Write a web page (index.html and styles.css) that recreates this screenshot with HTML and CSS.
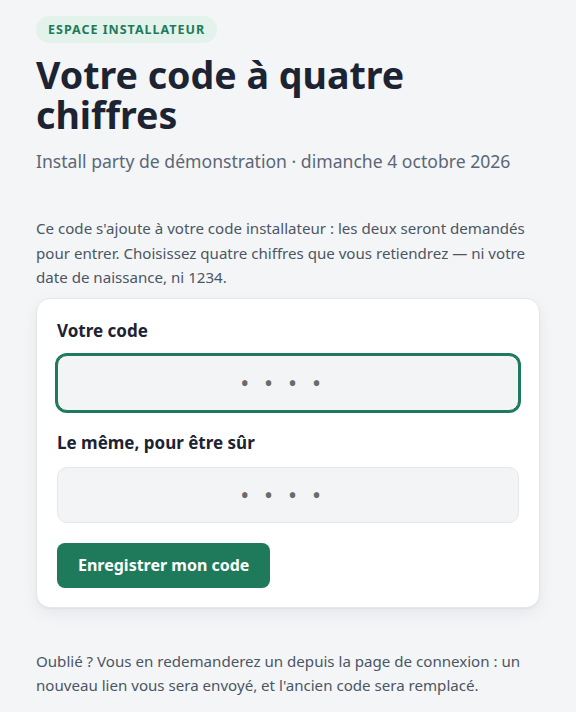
FILE: index.html
```html
<!DOCTYPE html>
<html lang="fr">
<head>
  <meta charset="UTF-8">
  <meta name="viewport" content="width=device-width, initial-scale=1.0">
  <title>Votre code à quatre chiffres</title>
  <link rel="stylesheet" href="styles.css">
</head>
<body>
  <main class="page">
    <header class="page-head">
      <span class="badge">Espace installateur</span>
      <h1 class="page-title">Votre code à quatre chiffres</h1>
      <p class="page-sub">Install party de démonstration · dimanche 4 octobre 2026</p>
    </header>

    <p class="intro">Ce code s'ajoute à votre code installateur : les deux seront demandés pour entrer. Choisissez quatre chiffres que vous retiendrez — ni votre date de naissance, ni 1234.</p>

    <form class="code-card" action="#" method="post">
      <div class="field">
        <label for="pin" class="field-label">Votre code</label>
        <input type="password" id="pin" class="pin-input is-focus" inputmode="numeric" maxlength="4" value="1234">
      </div>
      <div class="field">
        <label for="pin-confirm" class="field-label">Le même, pour être sûr</label>
        <input type="password" id="pin-confirm" class="pin-input" inputmode="numeric" maxlength="4" value="1234">
      </div>
      <button type="submit" class="btn-primary">Enregistrer mon code</button>
    </form>

    <p class="note">Oublié ? Vous en redemanderez un depuis la page de connexion : un nouveau lien vous sera envoyé, et l'ancien code sera remplacé.</p>
  </main>
</body>
</html>
```

FILE: styles.css
```css
*, *::before, *::after { box-sizing: border-box; }
body { margin: 0; background-color: #f4f5f7; font-family: "Noto Sans", "Open Sans", sans-serif; color: #1c2333; }
.page { max-width: 576px; margin: 0 auto; padding: 16px 36px 24px; }

/* en-tête */
.badge { display: inline-block; padding: 0 12px; height: 27px; line-height: 27px; border-radius: 999px; background-color: #e3f3ec; color: #1e7a5a; font-size: 12.5px; font-weight: 700; letter-spacing: 0.08em; text-transform: uppercase; }
.page-title { margin: 12px 0 0; font-size: 37.6px; line-height: 40px; font-weight: 700; color: #1c2333; }
.page-sub { margin: 13px 0 0; font-size: 17.6px; line-height: 27px; color: #5b6676; }

.intro { margin: 41px 0 8px; font-size: 15.1px; line-height: 24.5px; color: #4b5563; }

/* carte */
.code-card {
  display: flex;
  flex-direction: column;
  align-items: flex-start;
  gap: 20px;
  padding: 20px 20px 19px;
  background-color: #fff;
  border: 1px solid #e5e7eb;
  border-radius: 14px;
  box-shadow: 0 6px 16px rgba(17, 24, 39, 0.06), 0 1px 2px rgba(17, 24, 39, 0.04);
}
.field { display: flex; flex-direction: column; gap: 12px; width: 100%; }
.field-label { font-size: 17px; line-height: 24px; font-weight: 700; color: #1c2333; }
.pin-input {
  width: 100%;
  height: 56px;
  padding: 0 12px;
  border: 1px solid #e5e7eb;
  border-radius: 10px;
  background-color: #f3f4f6;
  font-family: inherit;
  font-size: 24px;
  letter-spacing: 0.62em;
  text-align: center;
  color: #6b6b6b;
  outline: none;
}
.pin-input.is-focus,
.pin-input:focus { border-color: #1e7a5a; box-shadow: 0 0 0 2px #1e7a5a; }

.btn-primary { height: 45px; padding: 0 21px; border: 0; border-radius: 8px; background-color: #1e7a5a; color: #fff; font-family: inherit; font-size: 16px; font-weight: 700; cursor: pointer; }

.note { margin: 41px 0 0; font-size: 15.1px; line-height: 24.5px; color: #4b5563; }
```
